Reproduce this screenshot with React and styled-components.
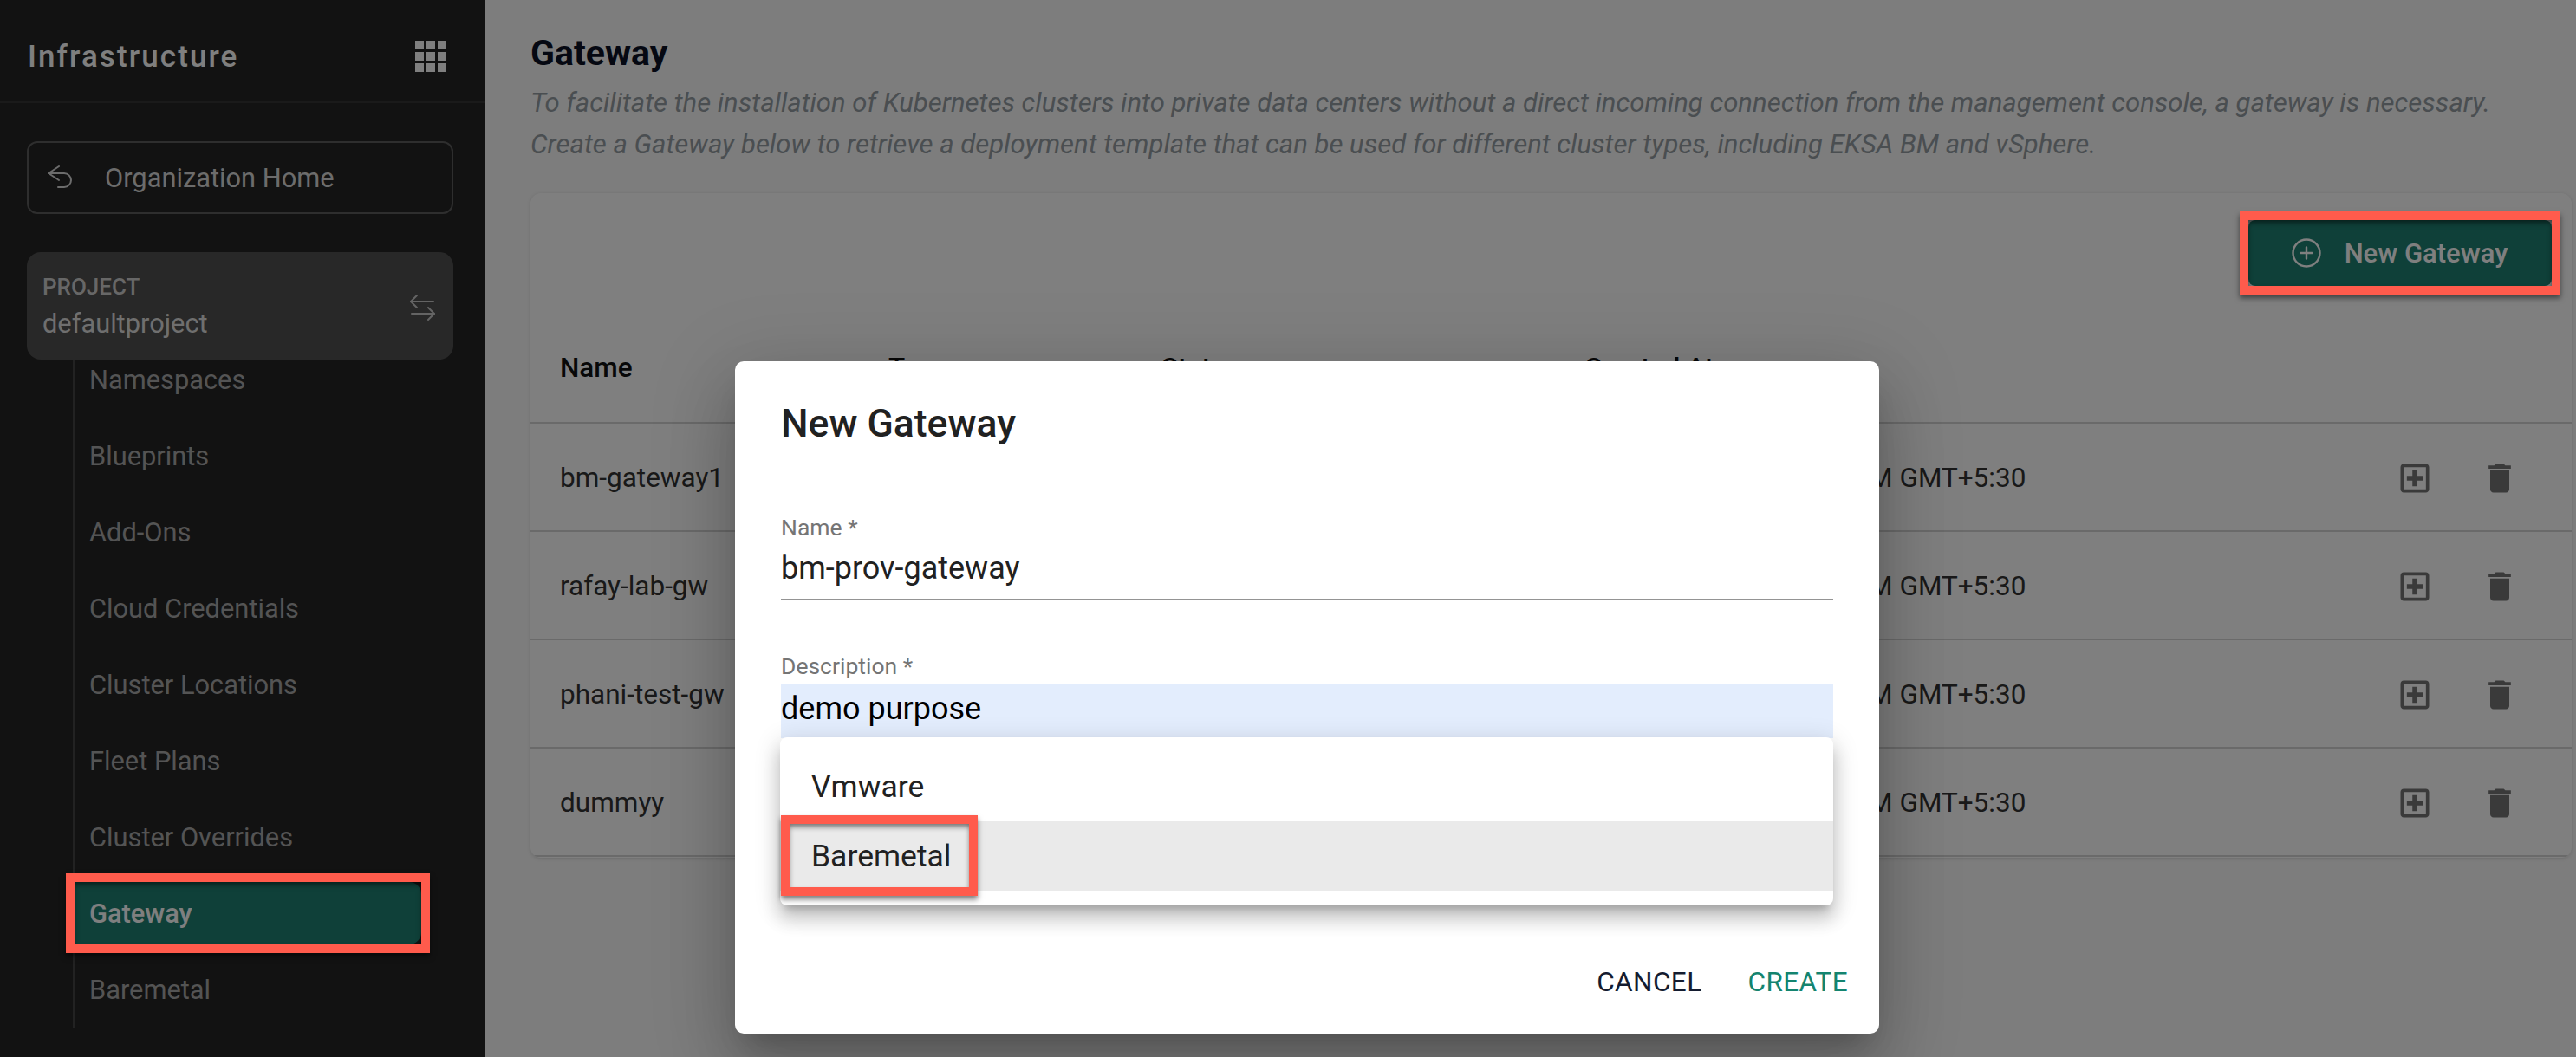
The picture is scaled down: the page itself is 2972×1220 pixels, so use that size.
import styled, { createGlobalStyle } from "styled-components";

const GlobalStyle = createGlobalStyle`
  html, body {
    margin: 0;
    padding: 0;
    background: #fafafa;
    font-family: Roboto, "Liberation Sans", sans-serif;
  }
  * {
    box-sizing: border-box;
  }
`;

const Page = styled.div`
  position: relative;
  display: flex;
  width: 2972px;
  height: 1220px;
  overflow: hidden;
  background: #fafafa;
`;

const Sidebar = styled.aside`
  width: 559px;
  flex-shrink: 0;
  display: flex;
  flex-direction: column;
  background: #242424;
  color: #fff;
`;

const SideHeader = styled.div`
  height: 119px;
  padding: 12px 44px 0 32px;
  display: flex;
  align-items: center;
  justify-content: space-between;
  border-bottom: 2px solid #343434;
`;

const SideTitle = styled.div`
  padding-top: 2px;
  font-size: 35px;
  font-weight: 500;
  letter-spacing: 2.1px;
  color: #fff;
`;

const HomeButton = styled.div`
  height: 84px;
  margin: 44px 36px 0 31px;
  padding-left: 22px;
  display: flex;
  align-items: center;
  gap: 38px;
  border: 2px solid #5c5c5c;
  border-radius: 12px;
  font-size: 30.8px;
  color: #d8d8d8;
`;

const ProjectCard = styled.div`
  position: relative;
  z-index: 1;
  height: 124px;
  margin: 44px 36px 0 31px;
  padding: 3px 19px 0 18px;
  display: flex;
  align-items: center;
  justify-content: space-between;
  background: #505050;
  border-radius: 16px;
`;

const ProjectLabel = styled.div`
  font-size: 26px;
  font-weight: 500;
  color: #cfcfcf;
  line-height: 36px;
`;

const ProjectName = styled.div`
  margin-top: 2px;
  font-size: 30.8px;
  color: #dedede;
  line-height: 46px;
`;

const NavClip = styled.div`
  flex: 1;
  min-height: 0;
  margin-top: -13px;
`;

const NavList = styled.nav`
  width: 402px;
  margin-left: 84px;
  padding: 0 0 9px;
  display: flex;
  flex-direction: column;
  gap: 16px;
  border-left: 2px solid #444;
`;

const NavItem = styled.div`
  position: relative;
  height: 72px;
  padding-left: 17px;
  display: flex;
  align-items: center;
  font-size: 30.8px;
  font-weight: ${(p) => (p.$active ? 500 : 400)};
  color: ${(p) => (p.$active ? "#fff" : "#a8a8a8")};
  background: ${(p) => (p.$active ? "#1e8072" : "transparent")};
  border-radius: ${(p) => (p.$active ? "0 14px 14px 0" : "0")};
`;

const Callout = styled.span`
  position: absolute;
  z-index: 20;
  top: ${(p) => p.$top}px;
  left: ${(p) => p.$left}px;
  right: ${(p) => p.$right}px;
  bottom: ${(p) => p.$bottom}px;
  border: 10px solid #ff5b4c;
  box-shadow: 0 4px 6px rgba(0, 0, 0, 0.5), inset 0 4px 6px -1px rgba(0, 0, 0, 0.55);
  pointer-events: none;
`;

const Main = styled.main`
  flex: 1;
  min-width: 0;
  padding: 36px 5px 0 53px;
`;

const PageTitle = styled.h1`
  margin: 0;
  font-size: 41px;
  line-height: 50px;
  font-weight: 700;
  color: #0a1024;
`;

const PageText = styled.p`
  margin: 9px 0 0;
  font-size: 31.08px;
  line-height: 47.5px;
  font-style: italic;
  color: #949ca2;
  white-space: nowrap;
`;

const TableCard = styled.section`
  margin-top: 33px;
  height: 767px;
  background: #fff;
  border-radius: 12px;
  box-shadow: 0 1px 4px rgba(0, 0, 0, 0.14);
  overflow: hidden;
`;

const Toolbar = styled.div`
  height: 107px;
  padding: 31px 23px 0 0;
  display: flex;
  justify-content: flex-end;
`;

const NewButton = styled.div`
  position: relative;
  width: 350px;
  height: 76px;
  padding-right: 2px;
  display: flex;
  align-items: center;
  justify-content: center;
  gap: 26px;
  font-size: 31px;
  font-weight: 500;
  color: #fff;
  background: #1e8072;
  border-radius: 8px;
`;

const Row = styled.div`
  height: ${(p) => p.$height}px;
  padding: ${(p) => (p.$head ? "32px" : "2px")} 0 0 34px;
  display: grid;
  grid-template-columns: 379px 315px 488px 936px 98px 105px;
  align-items: center;
  border-bottom: 2px solid #d4d4d4;
  font-size: 31.5px;
  font-weight: ${(p) => (p.$head ? 500 : 400)};
  color: ${(p) => (p.$head ? "#111" : "#333")};
  white-space: nowrap;
`;

const CreatedAt = styled.span`
  padding-left: 5px;
`;

const Icon = styled.svg`
  width: ${(p) => p.$size}px;
  height: ${(p) => p.$size}px;
  display: block;
  flex-shrink: 0;
  fill: ${(p) => p.$fill || "none"};
  stroke: ${(p) => p.$stroke || "none"};
`;

const Overlay = styled.div`
  position: absolute;
  inset: 0;
  z-index: 10;
  background: rgba(0, 0, 0, 0.5);
`;

const Dialog = styled.div`
  position: absolute;
  z-index: 15;
  left: 848px;
  top: 417px;
  width: 1320px;
  height: 776px;
  padding: 42px 53px 0;
  display: flex;
  flex-direction: column;
  background: #fff;
  border-radius: 10px;
  box-shadow: 0 22px 30px -14px rgba(0, 0, 0, 0.2), 0 48px 76px 6px rgba(0, 0, 0, 0.14),
    0 18px 92px 16px rgba(0, 0, 0, 0.12);
`;

const DialogTitle = styled.h2`
  margin: 0;
  font-size: 44.5px;
  line-height: 60px;
  font-weight: 500;
  color: #212121;
`;

const Field = styled.div`
  margin-top: ${(p) => p.$top}px;
  display: flex;
  flex-direction: column;
`;

const FieldLabel = styled.label`
  font-size: 26.5px;
  line-height: 30px;
  color: #757575;
`;

const FieldValue = styled.div`
  height: ${(p) => p.$height}px;
  margin-top: ${(p) => p.$gap}px;
  padding-bottom: ${(p) => (p.$filled ? "6px" : "3px")};
  display: flex;
  align-items: center;
  font-size: 36px;
  color: ${(p) => (p.$filled ? "#000" : "#212121")};
  background: ${(p) => (p.$filled ? "#e3edfd" : "transparent")};
  border-bottom: ${(p) => (p.$filled ? "0" : "2px solid #949494")};
`;

const Menu = styled.div`
  position: absolute;
  z-index: 2;
  left: 52px;
  top: 434px;
  width: 1215px;
  height: 194px;
  padding-top: 17px;
  background: #fff;
  border-radius: 8px;
  box-shadow: 0 10px 10px -6px rgba(0, 0, 0, 0.2), 0 16px 20px 2px rgba(0, 0, 0, 0.14),
    0 6px 28px 4px rgba(0, 0, 0, 0.12);
`;

const MenuItem = styled.div`
  position: relative;
  height: 80px;
  padding-left: 36px;
  display: flex;
  align-items: center;
  font-size: 35.5px;
  color: #212121;
  background: ${(p) => (p.$selected ? "#eaeaea" : "transparent")};
`;

const DialogActions = styled.div`
  margin-top: auto;
  height: 82px;
  margin-right: -17px;
  display: flex;
  justify-content: flex-end;
  gap: 53px;
  font-size: 31.5px;
  letter-spacing: 0.4px;
`;

const ActionButton = styled.div`
  padding-top: 4px;
  color: ${(p) => (p.$primary ? "#14846f" : "#141c30")};
`;

const navItems = [
  "Namespaces",
  "Blueprints",
  "Add-Ons",
  "Cloud Credentials",
  "Cluster Locations",
  "Fleet Plans",
  "Cluster Overrides",
  "Gateway",
  "Baremetal",
];

const gateways = ["bm-gateway1", "rafay-lab-gw", "phani-test-gw", "dummyy"];

const GridIcon = () => (
  <Icon $size={36} $fill="#fff" viewBox="0 0 36 36">
    {[0, 13, 26].map((y) =>
      [0, 13, 26].map((x) => <rect key={`${x}-${y}`} x={x} y={y} width="10" height="10" />)
    )}
  </Icon>
);

const BackIcon = () => (
  <Icon $size={28} $stroke="#d8d8d8" viewBox="0 0 28 28" strokeWidth="2" strokeLinecap="round" strokeLinejoin="round">
    <path d="M13 1 1 9l12 8" />
    <path d="M1 9h18a8 8 0 0 1 0 16h-7" />
  </Icon>
);

const SwapIcon = () => (
  <Icon $size={32} $stroke="#c8c8c8" viewBox="0 0 32 32" strokeWidth="2" strokeLinecap="round" strokeLinejoin="round">
    <path d="M9 2 2 9l7 7" />
    <path d="M2 9h26" />
    <path d="M22 16l7 7-7 7" />
    <path d="M29 23H3" />
  </Icon>
);

const PlusCircleIcon = () => (
  <Icon $size={36} $stroke="#fff" viewBox="0 0 36 36" strokeWidth="2.4" strokeLinecap="round">
    <circle cx="18" cy="18" r="15.5" />
    <path d="M18 11.5v13M11.5 18h13" />
  </Icon>
);

const AddBoxIcon = () => (
  <Icon $size={44} $fill="#757575" viewBox="0 0 24 24">
    <path d="M19 3H5c-1.11 0-2 .9-2 2v14c0 1.1.89 2 2 2h14c1.1 0 2-.9 2-2V5c0-1.1-.9-2-2-2zm0 16H5V5h14v14zM10.5 17h3v-3.5H17v-3h-3.5V7h-3v3.5H7v3h3.5z" />
  </Icon>
);

const TrashIcon = () => (
  <Icon $size={44} $fill="#757575" viewBox="0 0 24 24">
    <path d="M6 19c0 1.1.9 2 2 2h8c1.1 0 2-.9 2-2V7H6v12zM19 4h-3.5l-1-1h-5l-1 1H5v2h14V4z" />
  </Icon>
);

export default function App() {
  return (
    <Page>
      <GlobalStyle />
      <Sidebar>
        <SideHeader>
          <SideTitle>Infrastructure</SideTitle>
          <GridIcon />
        </SideHeader>
        <HomeButton>
          <BackIcon />
          Organization Home
        </HomeButton>
        <ProjectCard>
          <div>
            <ProjectLabel>PROJECT</ProjectLabel>
            <ProjectName>defaultproject</ProjectName>
          </div>
          <SwapIcon />
        </ProjectCard>
        <NavClip>
          <NavList>
            {navItems.map((item) => (
              <NavItem key={item} $active={item === "Gateway"}>
                {item}
                {item === "Gateway" && <Callout $top={-10} $left={-10} $right={-10} $bottom={-10} />}
              </NavItem>
            ))}
          </NavList>
        </NavClip>
      </Sidebar>

      <Main>
        <PageTitle>Gateway</PageTitle>
        <PageText>
          To facilitate the installation of Kubernetes clusters into private data centers without a direct incoming connection from the management console, a gateway is necessary.
          <br />
          Create a Gateway below to retrieve a deployment template that can be used for different cluster types, including EKSA BM and vSphere.
        </PageText>
        <TableCard>
          <Toolbar>
            <NewButton>
              <PlusCircleIcon />
              New Gateway
              <Callout $top={-10} $left={-10} $right={-10} $bottom={-10} />
            </NewButton>
          </Toolbar>
          <Row $head $height={159}>
            <span>Name</span>
            <span>Type</span>
            <span>Status</span>
            <span>Created At</span>
          </Row>
          {gateways.map((name) => (
            <Row key={name} $height={125}>
              <span>{name}</span>
              <span />
              <span />
              <CreatedAt>Apr 2, 2024, 10:24:13 AM GMT+5:30</CreatedAt>
              <AddBoxIcon />
              <TrashIcon />
            </Row>
          ))}
        </TableCard>
      </Main>

      <Overlay />

      <Dialog>
        <DialogTitle>New Gateway</DialogTitle>
        <Field $top={75}>
          <FieldLabel>Name *</FieldLabel>
          <FieldValue $height={69} $gap={0}>bm-prov-gateway</FieldValue>
        </Field>
        <Field $top={61}>
          <FieldLabel>Description *</FieldLabel>
          <FieldValue $filled $height={62} $gap={6}>demo purpose</FieldValue>
        </Field>
        <Menu>
          <MenuItem>Vmware</MenuItem>
          <MenuItem $selected>
            Baremetal
            <Callout $top={-7} $left={1} $right={987} $bottom={-6} />
          </MenuItem>
        </Menu>
        <DialogActions>
          <ActionButton>CANCEL</ActionButton>
          <ActionButton $primary>CREATE</ActionButton>
        </DialogActions>
      </Dialog>
    </Page>
  );
}
